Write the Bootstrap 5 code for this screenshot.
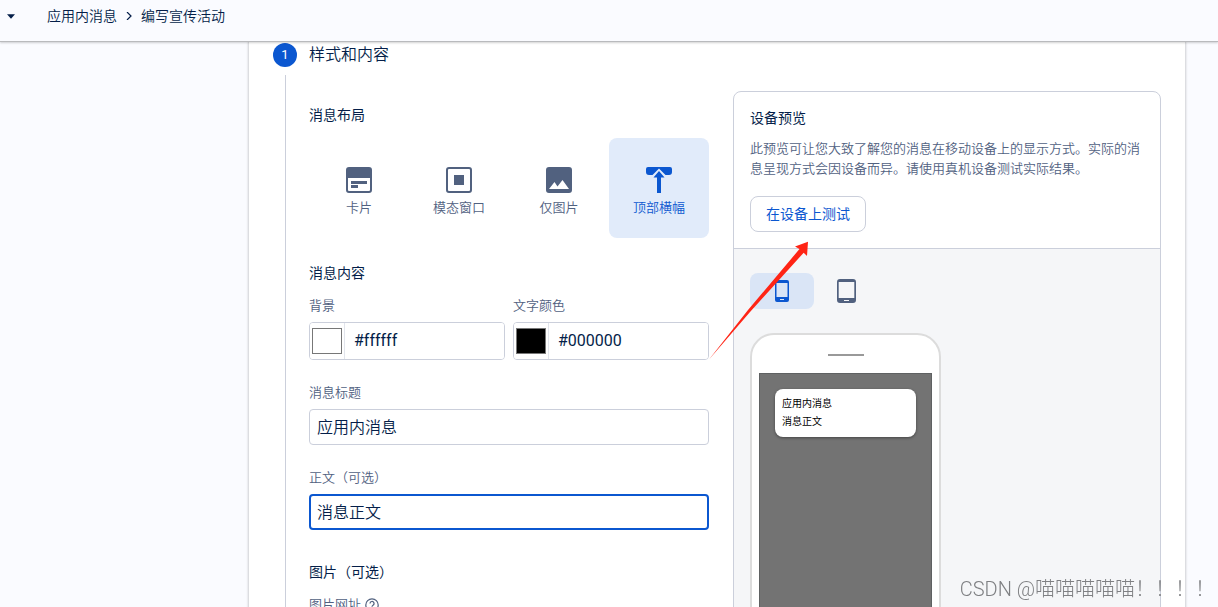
<!DOCTYPE html>
<html lang="zh-CN">
<head>
<meta charset="utf-8">
<meta name="viewport" content="width=device-width, initial-scale=1">
<title>编写宣传活动</title>
<link rel="stylesheet" href="https://cdn.jsdelivr.net/npm/bootstrap@5.3.0/dist/css/bootstrap.min.css">
<style>
  :root { --ink: #041e49; --muted: #51617f; --brand: #0b57d0; --line: #cbcfdb; }
  body { font: 350 14px/20px Roboto, "Noto Sans CJK SC", sans-serif; color: var(--ink); background: #fafbff; }
  .topbar { height: 42px; padding: 0 7px 9px; border-bottom: 1px solid #b9babd; box-shadow: 0 1px 2px rgba(0,0,0,.18); background: #fafbff; z-index: 2; }
  .caret-btn { width: 8px; height: 20px; }
  .crumbs { margin-left: 32px; gap: 9px; }
  .crumbs a { color: var(--ink); text-decoration: none; }
  .sheet { margin-left: 248px; margin-right: 32px; padding: 1px 24px 0; background: #fff; border: 1px solid #dcdde1; border-width: 0 1px; box-shadow: 0 0 2px rgba(0,0,0,.18); }
  .step-dot { width: 24px; height: 24px; background: var(--brand); color: #fff; font-size: 13px; font-weight: 400; }
  .step-title { font-size: 16px; line-height: 24px; font-weight: 350; }
  .rail { flex: 0 0 24px; margin-right: 12px; }
  .rail::before { content: ""; display: block; width: 1px; height: 100%; margin-left: 12px; background: var(--line); }
  .fields { flex: 0 0 400px; min-width: 0; padding-top: 29px; }
  .sub { font-size: 14px; line-height: 22px; font-weight: 400; margin: 0 0 12px; }
  .tag { display: block; font-size: 13px; line-height: 20px; color: var(--muted); margin-bottom: 6px; }
  .group { padding-top: 23px; }
  .tile { flex: 1 1 0; height: 100px; border-radius: 8px; padding-top: 29px; font-size: 13px; line-height: 20px; color: var(--muted); cursor: pointer; }
  .tile svg { margin-bottom: 5px; }
  .btn-check:checked + .tile { background: #e1ebfa; color: var(--brand); }
  .box { height: 36px; padding: 0 7px 3px; font: 350 16px/24px Roboto, "Noto Sans CJK SC", sans-serif; color: var(--ink); border: 1px solid var(--line); border-radius: 4px; }
  .box:focus { color: var(--ink); border-color: var(--brand); box-shadow: none; }
  .box.active { border: 2px solid var(--brand); padding: 0 6px 3px; }
  .hexcol { flex: 1 1 0; min-width: 0; }
  .hexbox { height: 38px; border: 1px solid var(--line); border-radius: 4px; overflow: hidden; }
  .hexbox input[type=color] { flex: 0 0 35px; height: 36px; padding: 5px 2px; border: 0; border-right: 1px solid #e2e5ec; background: #fff; }
  input[type=color]::-webkit-color-swatch-wrapper { padding: 0; }
  input[type=color]::-webkit-color-swatch { border: 1px solid #777; border-radius: 0; }
  .hexbox input[type=text] { min-width: 0; border: 0; padding: 0 9px; font-size: 16px; color: var(--ink); font-weight: 400; outline: 0; }
  .preview { flex: 1 1 0; min-width: 0; margin-top: 16px; border: 1px solid var(--line); border-radius: 8px 8px 0 0; }
  .preview-head { padding: 16px; border-bottom: 1px solid var(--line); }
  .preview-head .sub { line-height: 20px; margin-bottom: 11px; }
  .preview-head p { font-size: 13px; line-height: 20px; color: var(--muted); margin-bottom: 17px; }
  .test-btn { height: 36px; padding: 0 15px; font-size: 14px; color: var(--brand); border: 1px solid var(--line); border-radius: 8px; background: #fff; font-weight: 400; }
  .preview-body { background: #f5f6f8; padding: 24px 16px 0; }
  .dev { width: 64px; height: 36px; border-radius: 8px; color: var(--muted); cursor: pointer; }
  .btn-check:checked + .dev { background: #dae5f6; color: var(--brand); }
  .phone { width: 191px; height: 380px; margin-top: 24px; padding: 0 7px; background: #fff; border: 2px solid #dcdcdc; border-radius: 24px; }
  .speaker { width: 36px; height: 2px; background: #999; margin: 19px auto 17px; }
  .screen { height: 300px; padding: 15px 15px 0; background: #737373; border: 1px solid #5f6162; }
  .banner { padding: 6px 7px; background: #fff; color: #000; border-radius: 8px; font-size: 10px; line-height: 18px; font-weight: 400; box-shadow: 0 1px 3px rgba(0,0,0,.4); }
  .pointer { left: -26px; top: 149px; pointer-events: none; }
  .sign { right: 3px; bottom: 6px; font: 300 20px/24px Roboto, "Noto Sans CJK TC", sans-serif; color: #7f8083; z-index: 3; }
</style>
</head>
<body class="vh-100 overflow-hidden d-flex flex-column">
<header class="topbar d-flex align-items-center flex-shrink-0 position-relative">
  <button class="caret-btn btn p-0 border-0 d-flex align-items-center" aria-label="切换项目"><svg width="9" height="5" viewBox="0 0 9 5"><path d="M0 0h9L4.500 5z" fill="#041e49"/></svg></button>
  <nav class="crumbs d-flex align-items-center" aria-label="路径">
    <a href="#">应用内消息</a>
    <svg width="6" height="8" viewBox="0 0 6 8"><path d="M1 0l4 4-4 4" fill="none" stroke="#041e49" stroke-width="1.2"/></svg>
    <a href="#">编写宣传活动</a>
  </nav>
</header>
<main class="flex-grow-1 overflow-hidden d-flex flex-column">
  <section class="sheet flex-grow-1">
    <div class="d-flex align-items-center mb-2">
      <span class="step-dot rounded-circle d-flex align-items-center justify-content-center me-2">1</span>
      <h1 class="step-title mb-0 ms-1">样式和内容</h1>
    </div>
    <div class="d-flex">
      <div class="rail"></div>
      <form class="fields">
        <h2 class="sub">消息布局</h2>
        <div class="d-flex">
          <input class="btn-check" type="radio" name="layout" id="l1">
          <label class="tile d-flex flex-column align-items-center" for="l1">
            <svg width="26" height="26" viewBox="0 0 26 26" fill="currentColor"><path fill-rule="evenodd" d="M3 0h20a3 3 0 0 1 3 3v20a3 3 0 0 1-3 3H3a3 3 0 0 1-3-3V3a3 3 0 0 1 3-3zM2 11v12q0 1 1 1h20q1 0 1-1V11z"/><path d="M5 14h16v3H5zM5 18h7v3H5z"/></svg>卡片</label>
          <input class="btn-check" type="radio" name="layout" id="l2">
          <label class="tile d-flex flex-column align-items-center" for="l2">
            <svg width="26" height="26" viewBox="0 0 26 26" fill="currentColor"><rect x="1" y="1" width="24" height="24" rx="2" fill="none" stroke="currentColor" stroke-width="2"/><path d="M8 8h10v10H8z"/></svg>模态窗口</label>
          <input class="btn-check" type="radio" name="layout" id="l3">
          <label class="tile d-flex flex-column align-items-center" for="l3">
            <svg width="26" height="26" viewBox="0 0 26 26" fill="currentColor"><path fill-rule="evenodd" d="M3 0h20a3 3 0 0 1 3 3v20a3 3 0 0 1-3 3H3a3 3 0 0 1-3-3V3a3 3 0 0 1 3-3zM3 22h20l-6.500-9-5 6.500-3-4.500z"/></svg>仅图片</label>
          <input class="btn-check" type="radio" name="layout" id="l4" checked>
          <label class="tile d-flex flex-column align-items-center" for="l4">
            <svg width="26" height="26" viewBox="0 0 26 26" fill="currentColor"><path d="M2 0h22a2 2 0 0 1 2 2v3a3 3 0 0 1-3 3h-3.500L13 1.500 6.500 8H3a3 3 0 0 1-3-3V2a2 2 0 0 1 2-2z"/><path d="M13 4l5.500 6.500H15V26h-4V10.500H7.500z"/></svg>顶部横幅</label>
        </div>
        <h2 class="sub mt-4">消息内容</h2>
        <div class="d-flex gap-2">
          <div class="hexcol">
            <label class="tag" for="bg">背景</label>
            <div class="hexbox d-flex"><input type="color" value="#ffffff" aria-label="背景颜色"><input class="flex-fill" type="text" id="bg" value="#ffffff"></div>
          </div>
          <div class="hexcol">
            <label class="tag" for="fg">文字颜色</label>
            <div class="hexbox d-flex"><input type="color" value="#000000" aria-label="文字颜色"><input class="flex-fill" type="text" id="fg" value="#000000"></div>
          </div>
        </div>
        <div class="group">
          <label class="tag" for="ttl">消息标题</label>
          <input class="form-control box" type="text" id="ttl" value="应用内消息">
        </div>
        <div class="group">
          <label class="tag" for="txt">正文（可选）</label>
          <input class="form-control box active" type="text" id="txt" value="消息正文">
        </div>
        <div class="group">
          <h2 class="sub mt-2">图片（可选）</h2>
          <label class="tag d-flex align-items-center" for="img">图片网址
            <svg class="ms-1" width="14" height="14" viewBox="0 0 14 14" fill="none" stroke="currentColor" stroke-width="1.2"><circle cx="7" cy="7" r="6.200"/><path d="M5 5.500a2 2 0 1 1 3 1.700q-1 .6-1 1.500M7 10v1.300"/></svg></label>
          <input class="form-control box" type="text" id="img">
        </div>
      </form>
      <aside class="preview position-relative ms-4">
        <div class="preview-head">
          <h2 class="sub">设备预览</h2>
          <p>此预览可让您大致了解您的消息在移动设备上的显示方式。实际的消息呈现方式会因设备而异。请使用真机设备测试实际结果。</p>
          <button class="test-btn" type="button">在设备上测试</button>
        </div>
        <div class="preview-body">
          <div class="d-flex">
            <input class="btn-check" type="radio" name="device" id="d1" checked>
            <label class="dev d-flex align-items-center justify-content-center" for="d1" aria-label="手机"><svg width="14" height="22" viewBox="0 0 14 22" fill="currentColor"><path fill-rule="evenodd" d="M2 0h10a2 2 0 0 1 2 2v18a2 2 0 0 1-2 2H2a2 2 0 0 1-2-2V2a2 2 0 0 1 2-2zM1.500 3v14h11V3zM5 19v1h4v-1z"/></svg></label>
            <input class="btn-check" type="radio" name="device" id="d2">
            <label class="dev d-flex align-items-center justify-content-center" for="d2" aria-label="平板电脑"><svg width="19" height="24" viewBox="0 0 19 24" fill="currentColor"><path fill-rule="evenodd" d="M3 0h13a3 3 0 0 1 3 3v18a3 3 0 0 1-3 3H3a3 3 0 0 1-3-3V3a3 3 0 0 1 3-3zM1.700 3v16h15.600V3zM7 21v1h5v-1z"/></svg></label>
          </div>
          <div class="phone">
            <div class="speaker"></div>
            <div class="screen"><div class="banner">应用内消息<br>消息正文</div></div>
          </div>
        </div>
        <svg class="pointer position-absolute" width="102" height="120" viewBox="0 0 102 120"><path d="M1 118.500L40 69 91.500 8 87 5.500 100 .7 99 15l-3.300-3.300L42 71z" fill="#ff2415"/></svg>
      </aside>
    </div>
  </section>
</main>
<div class="sign position-fixed">CSDN @喵喵喵喵喵！！！！</div>
<script src="https://cdn.jsdelivr.net/npm/bootstrap@5.3.0/dist/js/bootstrap.bundle.min.js"></script>
</body>
</html>
